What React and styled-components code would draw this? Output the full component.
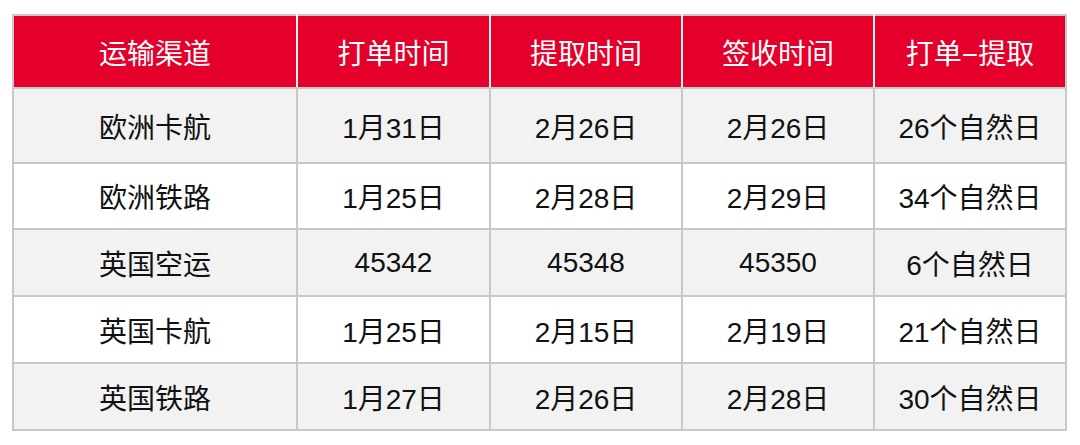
import React from 'react'
import styled, { createGlobalStyle } from 'styled-components'

const GlobalStyle = createGlobalStyle`
    body {
        margin: 0;
        background: #fff;
        font-family: "Liberation Sans", "Noto Sans CJK SC", sans-serif;
    }
`

const columns = [
    { title: '运输渠道', width: 284 },
    { title: '打单时间', width: 193 },
    { title: '提取时间', width: 192 },
    { title: '签收时间', width: 192 },
    { title: '打单−提取', width: 192 },
]

const rows = [
    { height: 75, cells: ['欧洲卡航', '1月31日', '2月26日', '2月26日', '26个自然日'] },
    { height: 66, cells: ['欧洲铁路', '1月25日', '2月28日', '2月29日', '34个自然日'] },
    { height: 67, cells: ['英国空运', '45342', '45348', '45350', '6个自然日'] },
    { height: 67, cells: ['英国卡航', '1月25日', '2月15日', '2月19日', '21个自然日'] },
    { height: 67, cells: ['英国铁路', '1月27日', '2月26日', '2月28日', '30个自然日'] },
]

const App = () => {
    return (
        <Page>
            <GlobalStyle />
            <Table>
                <colgroup>
                    {columns.map((c) => (
                        <col key={c.title} style={{ width: c.width }} />
                    ))}
                </colgroup>
                <thead>
                    <HeadRow>
                        {columns.map((c) => (
                            <HeadCell key={c.title}>{c.title}</HeadCell>
                        ))}
                    </HeadRow>
                </thead>
                <tbody>
                    {rows.map((r, i) => (
                        <BodyRow key={r.cells[0]} $shaded={i % 2 === 0} style={{ height: r.height }}>
                            {r.cells.map((text, j) => (
                                <Cell key={j}>{text}</Cell>
                            ))}
                        </BodyRow>
                    ))}
                </tbody>
            </Table>
        </Page>
    )
}

const Page = styled.div`
    padding: 14px 0 0 12px;
`
const Table = styled.table`
    border-collapse: collapse;
    table-layout: fixed;
    width: 1053px;
    font-size: 28px;
    color: #111;
`
const HeadRow = styled.tr`
    height: 73px;
    background: #e4002b;
`
const HeadCell = styled.th`
    font-weight: 400;
    color: #fff;
    text-align: center;
    vertical-align: middle;
    border: 2px solid #c8c8c8;
    border-right-color: #f4f4f4;
    padding: 0;
    &:last-child {
        border-right-color: #c8c8c8;
    }
`
const BodyRow = styled.tr`
    background: ${(p) => (p.$shaded ? '#f2f2f2' : '#ffffff')};
`
const Cell = styled.td`
    text-align: center;
    vertical-align: middle;
    border: 2px solid #c8c8c8;
    padding: 0;
`

export default App
